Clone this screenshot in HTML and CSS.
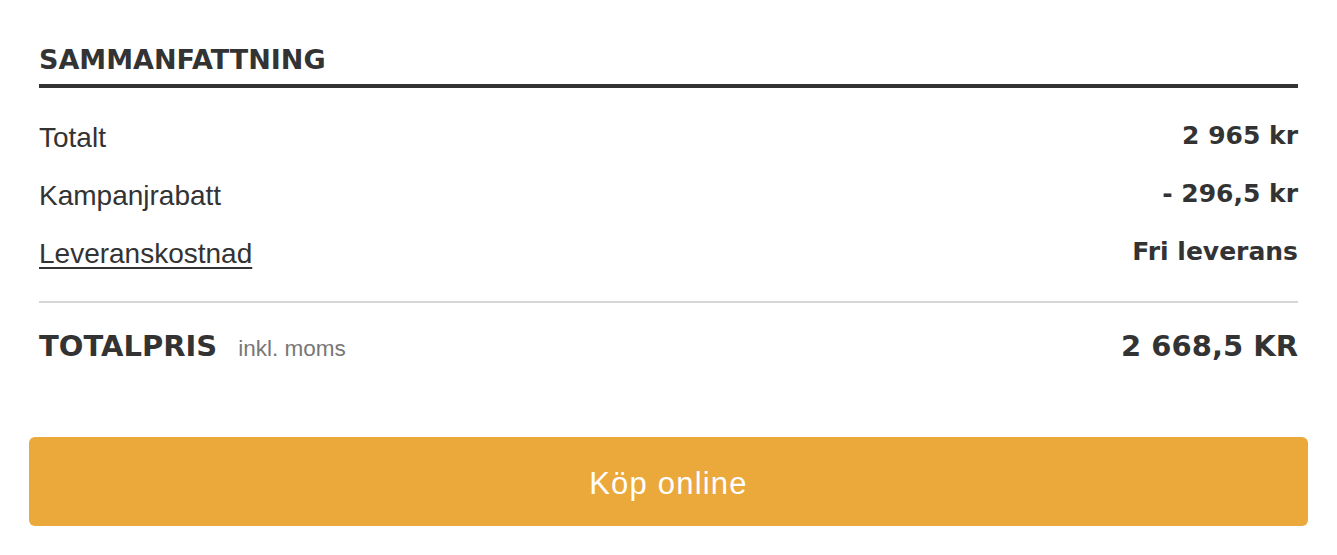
FILE: index.html
```html
<!DOCTYPE html>
<html lang="sv">
<head>
<meta charset="utf-8">
<title>Sammanfattning</title>
<link rel="stylesheet" href="styles.css">
</head>
<body>
<div class="summary">
  <div class="summary-body">
    <h2 class="summary-title">SAMMANFATTNING</h2>
    <div class="rows">
      <div class="row"><span class="label">Totalt</span><span class="value">2 965 kr</span></div>
      <div class="row"><span class="label">Kampanjrabatt</span><span class="value">- 296,5 kr</span></div>
      <div class="row"><a class="label link" href="#">Leveranskostnad</a><span class="value">Fri leverans</span></div>
    </div>
    <div class="total-row">
      <div class="total-label"><span class="total-title">TOTALPRIS</span><span class="vat">inkl. moms</span></div>
      <span class="total-value">2 668,5 KR</span>
    </div>
  </div>
  <button class="buy-button" type="button">Köp online</button>
</div>
</body>
</html>
```

FILE: styles.css
```css
html, body {
  margin: 0;
  padding: 0;
  background: #ffffff;
}

body {
  font-family: "Liberation Sans", Arial, Helvetica, sans-serif;
  color: #333333;
}

.summary {
  padding-top: 43px;
}

.summary-body {
  padding: 0 39px;
}

.summary-title {
  margin: 0;
  font-family: "DejaVu Sans", "Liberation Sans", sans-serif;
  font-size: 27px;
  line-height: 34px;
  font-weight: 700;
  padding-bottom: 7px;
  border-bottom: 4px solid #333333;
}

.rows {
  padding-top: 21px;
  padding-bottom: 18px;
  border-bottom: 2px solid #d6d6d6;
}

.row {
  display: flex;
  justify-content: space-between;
  align-items: flex-start;
  padding: 12px 0;
  height: 34px;
}

.label {
  font-size: 28px;
  line-height: 34px;
  color: #333333;
}

.link {
  text-decoration: underline;
  text-decoration-thickness: 2px;
  text-underline-offset: 4px;
}

.value {
  font-family: "DejaVu Sans", "Liberation Sans", sans-serif;
  font-size: 25px;
  line-height: 30px;
  font-weight: 700;
}

.total-row {
  display: flex;
  justify-content: space-between;
  align-items: baseline;
  padding-top: 25px;
}

.total-label {
  display: flex;
  align-items: baseline;
  gap: 21px;
}

.total-title {
  font-family: "DejaVu Sans", "Liberation Sans", sans-serif;
  font-size: 29px;
  line-height: 36px;
  font-weight: 700;
}

.vat {
  font-size: 22.5px;
  color: #777777;
}

.total-value {
  font-family: "DejaVu Sans", "Liberation Sans", sans-serif;
  font-size: 29px;
  line-height: 36px;
  font-weight: 700;
}

.buy-button {
  display: block;
  box-sizing: border-box;
  width: calc(100% - 58px);
  margin: 73px 29px 0;
  height: 89px;
  padding: 4px 0 0;
  border: none;
  border-radius: 6px;
  background: #eba83b;
  color: #ffffff;
  font-family: "Liberation Sans", Arial, Helvetica, sans-serif;
  font-size: 31px;
  letter-spacing: 1.2px;
  cursor: pointer;
}
```
